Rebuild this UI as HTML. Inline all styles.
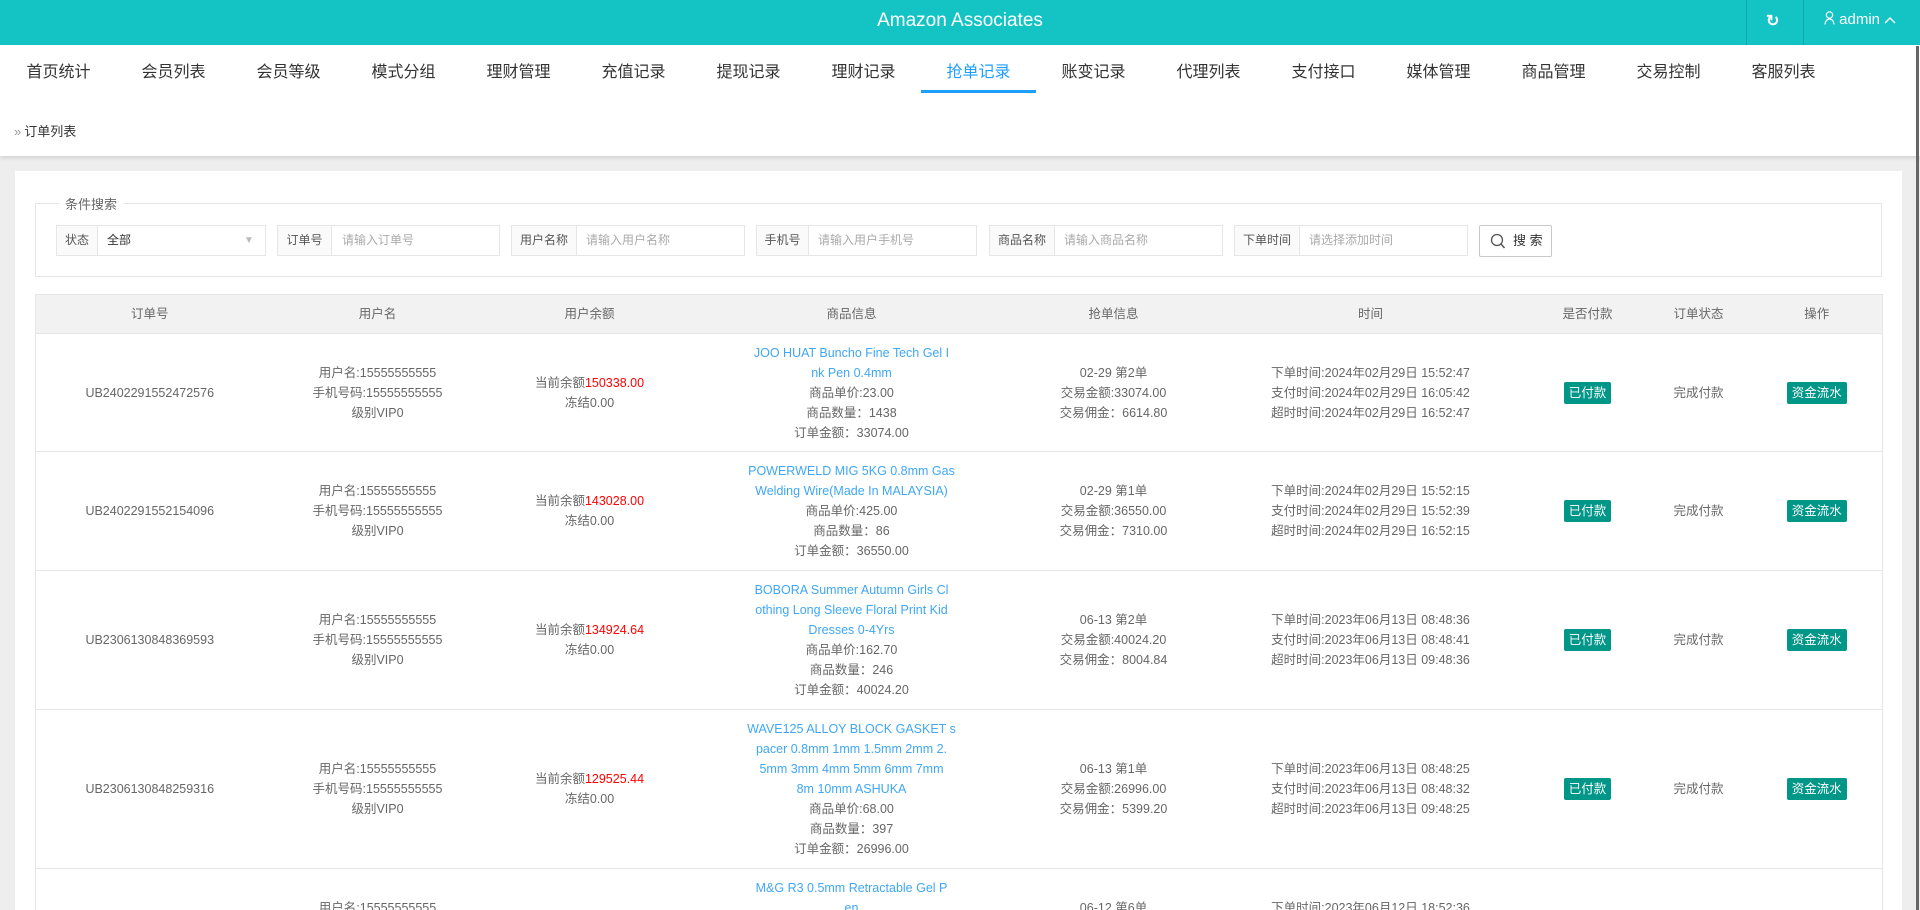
<!DOCTYPE html>
<html><head><meta charset="utf-8"><style>
*{margin:0;padding:0;box-sizing:border-box}
html{width:1920px;height:910px;overflow:hidden}
body{width:1920px;height:910px;overflow:hidden;background:#eee;font-family:"Liberation Sans","Noto Sans CJK SC",sans-serif;color:#666;font-size:13px;position:relative}
.hd{position:absolute;left:0;top:0;width:1920px;height:45px;background:#14c3c3;color:#fff}
.hd .t{position:absolute;left:0;width:1920px;text-align:center;top:10px;font-size:19px}
.hd .s1{position:absolute;left:1746px;top:0;width:1px;height:45px;background:#10a9a9}
.hd .s2{position:absolute;left:1803px;top:0;width:1px;height:45px;background:#10a9a9}
.hd .r{position:absolute;left:1766px;top:11px;font-size:16px;font-weight:bold}
.hd .ad{position:absolute;left:1824px;top:11px;font-size:15px}
.top{position:absolute;left:0;top:45px;width:1920px;height:111px;background:#fff;box-shadow:0 2px 4px rgba(0,0,0,.12)}
.nav{position:absolute;left:1px;top:0;height:48px}
.nav span{float:left;width:115px;text-align:center;font-size:16px;color:#333;line-height:56px;height:48px}
.nav span.a{color:#1e9fff;border-bottom:3px solid #1e9fff}
.bc{position:absolute;left:14px;top:76px;font-size:13px;color:#333}
.bc i{font-style:normal;color:#999;margin-right:3px}
.wrap{position:absolute;left:0;top:0;width:1920px;height:910px;overflow:hidden}
.card{position:absolute;left:15px;top:171px;width:1887px;height:760px;background:#fff}
.fs{position:absolute;left:35px;top:203px;width:1847px;height:74px;border:1px solid #e6e6e6}
.lg{position:absolute;left:59px;top:194px;background:#fff;padding:0 6px;font-size:13px;color:#666}
.g{position:absolute;top:225px;height:31px;border:1px solid #e6e6e6;background:#fff;font-size:12px}
.g b{font-weight:normal;position:absolute;left:0;top:0;height:29px;background:#fafafa;border-right:1px solid #e6e6e6;line-height:29px;text-align:center;color:#555}
.g em{font-style:normal;position:absolute;top:0;line-height:29px;color:#aaa}
.btn{position:absolute;left:1479px;top:225px;width:73px;height:32px;border:1px solid #c9c9c9;border-radius:2px;font-size:13px;color:#333;line-height:30px;padding-left:33px}
table{position:absolute;left:35px;top:294px;width:1847px;border-collapse:collapse;table-layout:fixed;border-left:1px solid #e6e6e6;border-right:1px solid #e6e6e6}
td,th{text-align:center;vertical-align:middle;line-height:20px;font-size:12.5px;font-weight:normal;border-top:1px solid #e6e6e6;color:#666;padding:0}
th{background:#f2f2f2;height:39px;color:#666}
.rd{color:#f00}
.lk{color:#3fa7f5}
.bd{display:inline-block;background:#009688;color:#fff;height:22px;line-height:22px;padding:0 5px;border-radius:2px;font-size:12.5px}
.sb{position:absolute;left:1916px;top:46px;width:3px;height:864px;background:#666}
</style></head><body><div class="wrap">
<div class="hd"><div class="t">Amazon Associates</div><div class="s1"></div><div class="s2"></div>
<div class="r">&#x21bb;</div><div class="ad"><svg width="11" height="14" viewBox="0 0 11 14" style="vertical-align:-1px"><circle cx="5.5" cy="4" r="3.2" fill="none" stroke="#fff" stroke-width="1.2"/><path d="M1 13.5c0-3 2-5.5 4.5-5.5S10 10.5 10 13.5" fill="none" stroke="#fff" stroke-width="1.2"/></svg> admin <svg width="12" height="8" viewBox="0 0 12 8"><path d="M1 7l5-5 5 5" fill="none" stroke="#fff" stroke-width="1.4"/></svg></div></div>
<div class="top"><div class="nav">
<span>首页统计</span><span>会员列表</span><span>会员等级</span><span>模式分组</span><span>理财管理</span><span>充值记录</span><span>提现记录</span><span>理财记录</span><span class="a">抢单记录</span><span>账变记录</span><span>代理列表</span><span>支付接口</span><span>媒体管理</span><span>商品管理</span><span>交易控制</span><span>客服列表</span>
</div><div class="bc"><i>»</i>订单列表</div></div>
<div class="card"></div>
<div class="fs"></div><div class="lg">条件搜索</div>
<div class="g" style="left:56px;width:210px"><b style="width:41px">状态</b><em style="left:50px;color:#333">全部</em><em style="left:187px;color:#bbb;font-size:10px">▼</em></div>
<div class="g" style="left:277px;width:223px"><b style="width:54px">订单号</b><em style="left:64px">请输入订单号</em></div>
<div class="g" style="left:511px;width:234px"><b style="width:65px">用户名称</b><em style="left:74px">请输入用户名称</em></div>
<div class="g" style="left:756px;width:221px"><b style="width:52px">手机号</b><em style="left:61px">请输入用户手机号</em></div>
<div class="g" style="left:989px;width:234px"><b style="width:65px">商品名称</b><em style="left:74px">请输入商品名称</em></div>
<div class="g" style="left:1234px;width:234px"><b style="width:65px">下单时间</b><em style="left:74px">请选择添加时间</em></div>
<div class="btn"><svg style="position:absolute;left:10px;top:7px" width="16" height="17" viewBox="0 0 16 17"><circle cx="7" cy="7" r="5.5" fill="none" stroke="#555" stroke-width="1.3"/><path d="M11 11l3.5 4" stroke="#555" stroke-width="1.5"/></svg>搜 索</div>
<table>
<colgroup><col style="width:228px"><col style="width:228px"><col style="width:196px"><col style="width:328px"><col style="width:196px"><col style="width:318px"><col style="width:116px"><col style="width:106px"><col style="width:131px"></colgroup>
<tr><th>订单号</th><th>用户名</th><th>用户余额</th><th>商品信息</th><th>抢单信息</th><th>时间</th><th>是否付款</th><th>订单状态</th><th>操作</th></tr>
<tr style="height:118px"><td>UB2402291552472576</td><td>用户名:15555555555<br>手机号码:15555555555<br>级别VIP0</td><td>当前余额<span class="rd">150338.00</span><br>冻结0.00</td><td><span class="lk">JOO HUAT Buncho Fine Tech Gel I<br>nk Pen 0.4mm</span><br>商品单价:23.00<br>商品数量：1438<br>订单金额：33074.00</td><td>02-29 第2单<br>交易金额:33074.00<br>交易佣金：6614.80</td><td>下单时间:2024年02月29日 15:52:47<br>支付时间:2024年02月29日 16:05:42<br>超时时间:2024年02月29日 16:52:47</td><td><span class="bd">已付款</span></td><td>完成付款</td><td><span class="bd">资金流水</span></td></tr>
<tr style="height:119px"><td>UB2402291552154096</td><td>用户名:15555555555<br>手机号码:15555555555<br>级别VIP0</td><td>当前余额<span class="rd">143028.00</span><br>冻结0.00</td><td><span class="lk">POWERWELD MIG 5KG 0.8mm Gas<br>Welding Wire(Made In MALAYSIA)</span><br>商品单价:425.00<br>商品数量：86<br>订单金额：36550.00</td><td>02-29 第1单<br>交易金额:36550.00<br>交易佣金：7310.00</td><td>下单时间:2024年02月29日 15:52:15<br>支付时间:2024年02月29日 15:52:39<br>超时时间:2024年02月29日 16:52:15</td><td><span class="bd">已付款</span></td><td>完成付款</td><td><span class="bd">资金流水</span></td></tr>
<tr style="height:139px"><td>UB2306130848369593</td><td>用户名:15555555555<br>手机号码:15555555555<br>级别VIP0</td><td>当前余额<span class="rd">134924.64</span><br>冻结0.00</td><td><span class="lk">BOBORA Summer Autumn Girls Cl<br>othing Long Sleeve Floral Print Kid<br>Dresses 0-4Yrs</span><br>商品单价:162.70<br>商品数量：246<br>订单金额：40024.20</td><td>06-13 第2单<br>交易金额:40024.20<br>交易佣金：8004.84</td><td>下单时间:2023年06月13日 08:48:36<br>支付时间:2023年06月13日 08:48:41<br>超时时间:2023年06月13日 09:48:36</td><td><span class="bd">已付款</span></td><td>完成付款</td><td><span class="bd">资金流水</span></td></tr>
<tr style="height:159px"><td>UB2306130848259316</td><td>用户名:15555555555<br>手机号码:15555555555<br>级别VIP0</td><td>当前余额<span class="rd">129525.44</span><br>冻结0.00</td><td><span class="lk">WAVE125 ALLOY BLOCK GASKET s<br>pacer 0.8mm 1mm 1.5mm 2mm 2.<br>5mm 3mm 4mm 5mm 6mm 7mm<br>8m 10mm ASHUKA</span><br>商品单价:68.00<br>商品数量：397<br>订单金额：26996.00</td><td>06-13 第1单<br>交易金额:26996.00<br>交易佣金：5399.20</td><td>下单时间:2023年06月13日 08:48:25<br>支付时间:2023年06月13日 08:48:32<br>超时时间:2023年06月13日 09:48:25</td><td><span class="bd">已付款</span></td><td>完成付款</td><td><span class="bd">资金流水</span></td></tr>
<tr style="height:119px"><td>UB2306121852364412</td><td>用户名:15555555555<br>手机号码:15555555555<br>级别VIP0</td><td>当前余额<span class="rd">124125.44</span><br>冻结0.00</td><td><span class="lk">M&amp;G R3 0.5mm Retractable Gel P<br>en</span><br>商品单价:6.00<br>商品数量：100<br>订单金额：600.00</td><td>06-12 第6单<br>交易金额:600.00<br>交易佣金：120.00</td><td>下单时间:2023年06月12日 18:52:36<br>支付时间:2023年06月12日 18:52:40<br>超时时间:2023年06月12日 19:52:36</td><td><span class="bd">已付款</span></td><td>完成付款</td><td><span class="bd">资金流水</span></td></tr>
</table>
<div class="sb"></div>
</div></body></html>
